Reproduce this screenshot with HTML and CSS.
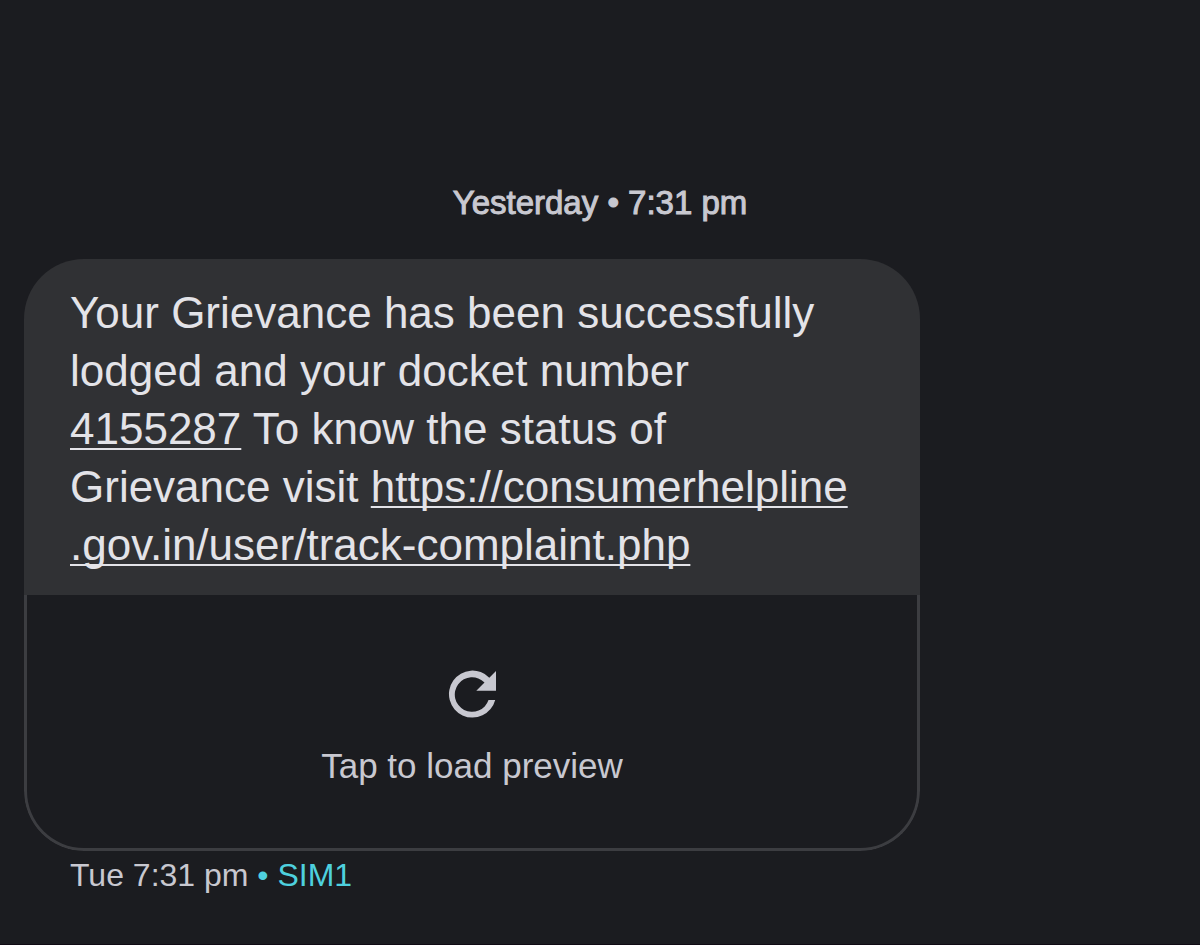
FILE: index.html
```html
<!DOCTYPE html>
<html lang="en">
<head>
<meta charset="utf-8">
<meta name="viewport" content="width=device-width, initial-scale=1">
<title>Messages</title>
<link rel="stylesheet" href="styles.css">
</head>
<body>
<main class="thread">
  <p class="day">Yesterday • 7:31 pm</p>
  <article class="message">
    <p class="message-text">Your Grievance has been successfully<br>lodged and your docket number<br><a href="#docket">4155287</a> To know the status of<br>Grievance visit <a href="#track">https://consumerhelpline<wbr>.gov.in/user/track-complaint.php</a></p>
    <button class="preview" type="button">
      <svg class="reload" viewBox="0 0 48 48" aria-hidden="true"><path d="M47.2 30A23.5 23.5 0 1 1 41.3 7.7L48 1V20.7H28.3L36.5 12.5A17.3 17.3 0 1 0 40.5 30Z"/></svg>
      <span>Tap to load preview</span>
    </button>
  </article>
  <p class="meta">Tue 7:31 pm <span class="sim">• SIM1</span></p>
</main>
</body>
</html>
```
FILE: styles.css
```css
* {
  box-sizing: border-box;
}

body {
  margin: 0;
  background: #1b1c20;
  color: #c8c8d0;
  font-family: "Liberation Sans", Arial, sans-serif;
}

p {
  margin: 0;
}

.thread {
  min-height: 100vh;
  padding: 183px 24px 0;
  border-bottom: 1px solid #100a14;
}

.day {
  margin-bottom: 36px;
  font-size: 33px;
  line-height: 40px;
  text-align: center;
  -webkit-text-stroke: 1px;
}

.message {
  max-width: 896px;
  overflow: hidden;
  border-radius: 60px;
}

.message-text {
  padding: 25px 46px 21px;
  background: #303134;
  color: #e3e3e8;
  font-size: 44px;
  line-height: 58px;
}

.message-text a {
  color: inherit;
  text-decoration-thickness: 2px;
  text-underline-offset: 4px;
  text-decoration-skip-ink: none;
}

.preview {
  display: flex;
  flex-direction: column;
  align-items: center;
  gap: 28px;
  width: 100%;
  padding: 75px 24px 62px;
  border: 3px solid #3c3d41;
  border-top: 0;
  border-radius: 0 0 60px 60px;
  background: transparent;
  color: inherit;
  font: inherit;
  font-size: 35px;
  line-height: 40px;
}

.reload {
  width: 48px;
  height: 48px;
  fill: #c8c8d0;
}

.meta {
  padding: 4px 46px;
  font-size: 32px;
  line-height: 40px;
}

.sim {
  color: #4ed0de;
}
```
